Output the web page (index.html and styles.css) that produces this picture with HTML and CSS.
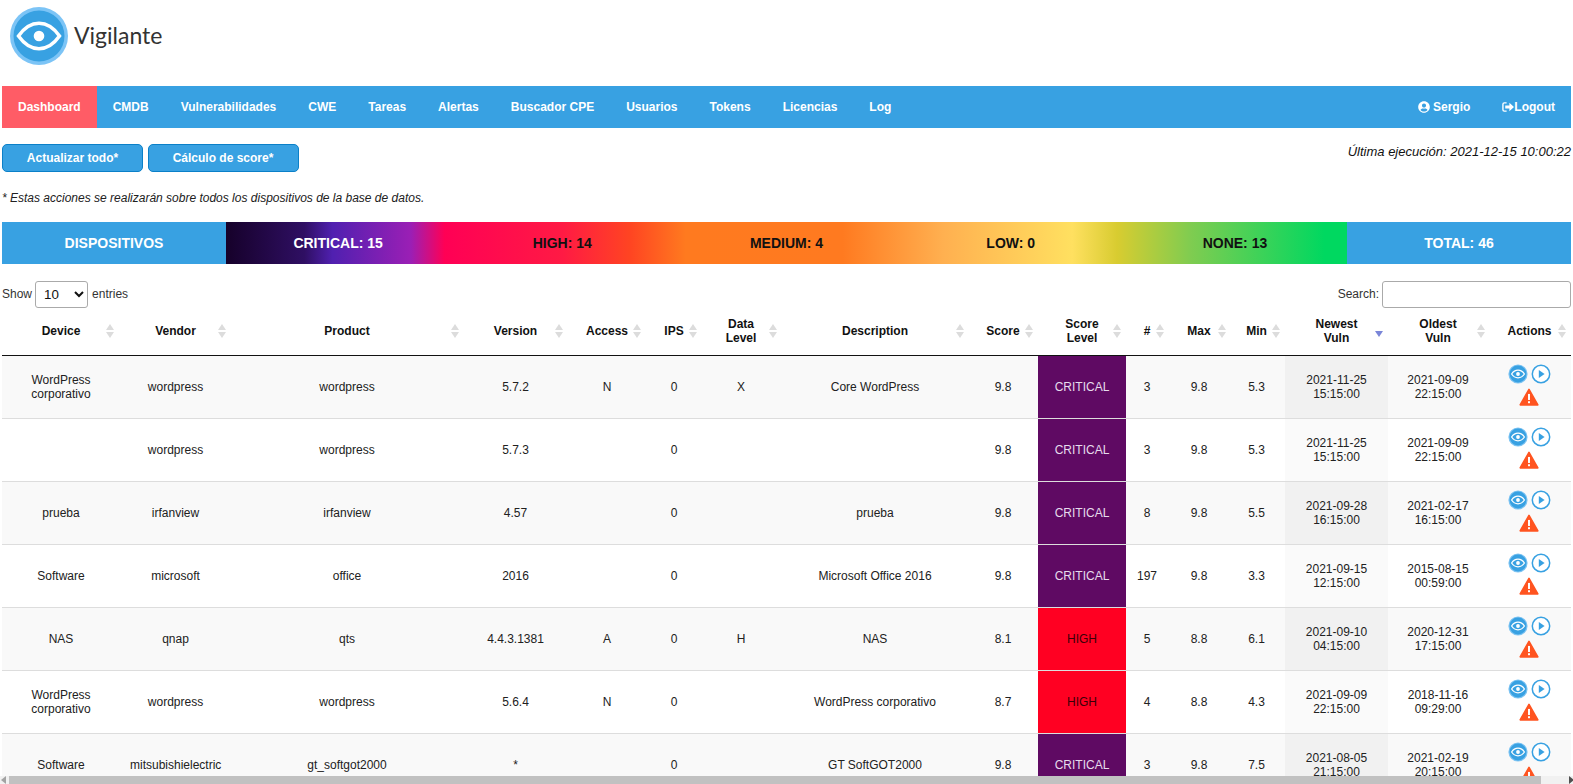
FILE: index.html
```html
<!DOCTYPE html>
<html lang="es">
<head>
<meta charset="utf-8">
<title>Vigilante</title>
<link rel="stylesheet" href="styles.css">
</head>
<body>
<svg class="defs" width="0" height="0" aria-hidden="true">
  <symbol id="i-eye" viewBox="0 0 20 20">
    <circle cx="10" cy="10" r="9.6" fill="#7cc3f2"/>
    <circle cx="10" cy="10" r="8.4" fill="#38a1e2"/>
    <path d="M3.6 10C5.2 7.5 7.4 6.2 10 6.2s4.8 1.3 6.4 3.8c-1.6 2.5-3.8 3.8-6.4 3.8S5.2 12.500 3.600 10z" fill="none" stroke="#fff" stroke-width="1.3"/>
    <circle cx="10" cy="10" r="1.9" fill="#fff"/>
  </symbol>
  <symbol id="i-play" viewBox="0 0 20 20">
    <circle cx="10" cy="10" r="8.700" fill="#fff" stroke="#38a1e2" stroke-width="1.500"/>
    <path d="M7.800 6.100l5.800 3.900-5.800 3.900z" fill="#38a1e2"/>
  </symbol>
  <symbol id="i-warn" viewBox="0 0 22 20">
    <path d="M11 1.500L20.800 18.700H1.200z" fill="#ff5420" stroke="#ff5420" stroke-width="1.800" stroke-linejoin="round"/>
    <rect x="9.900" y="6.600" width="2.200" height="6.700" fill="#fff"/>
    <rect x="9.900" y="14.700" width="2.200" height="2.200" fill="#fff"/>
  </symbol>
</svg>

<header class="brand">
  <svg class="logo" viewBox="0 0 58 58" width="58" height="58" aria-hidden="true">
    <circle cx="29" cy="29" r="29" fill="#7cc4f6"/>
    <circle cx="29" cy="29" r="25.500" fill="#38a1e2"/>
    <path d="M8.500 29C14.500 20.500 21.500 16.300 29 16.300S43.500 20.500 49.500 29C43.500 37.500 36.500 41.700 29 41.700S14.500 37.500 8.500 29z" fill="none" stroke="#fff" stroke-width="3.500"/>
    <circle cx="29" cy="29" r="5.300" fill="#fff"/>
  </svg>
  <span class="brand-name">Vigilante</span>
</header>

<nav class="nav">
  <a class="nav-item active">Dashboard</a>
  <a class="nav-item">CMDB</a>
  <a class="nav-item">Vulnerabilidades</a>
  <a class="nav-item">CWE</a>
  <a class="nav-item">Tareas</a>
  <a class="nav-item">Alertas</a>
  <a class="nav-item">Buscador CPE</a>
  <a class="nav-item">Usuarios</a>
  <a class="nav-item">Tokens</a>
  <a class="nav-item">Licencias</a>
  <a class="nav-item">Log</a>
  <a class="nav-item push">
    <svg class="nav-icon" viewBox="0 0 496 512" aria-hidden="true"><path fill="#fff" d="M248 8C111 8 0 119 0 256s111 248 248 248 248-111 248-248S385 8 248 8zm0 96c48.600 0 88 39.400 88 88s-39.400 88-88 88-88-39.400-88-88 39.400-88 88-88zm0 344c-58.700 0-111.300-26.600-146.500-68.200 18.800-35.400 55.600-59.800 98.500-59.800 2.400 0 4.800.4 7.100 1.100 13 4.200 26.600 6.900 40.900 6.900 14.300 0 28-2.700 40.900-6.900 2.300-.7 4.700-1.100 7.100-1.100 42.900 0 79.700 24.400 98.500 59.800C359.300 421.400 306.700 448 248 448z"/></svg>
    Sergio</a>
  <a class="nav-item logout">
    <svg class="nav-icon" viewBox="0 0 13 11" aria-hidden="true"><path d="M5 1H2.500A1.500 1.500 0 0 0 1 2.500v6A1.500 1.500 0 0 0 2.500 10H5" fill="none" stroke="#fff" stroke-width="1.500"/><path d="M3.500 4h4.500V1l5 4.500-5 4.500V7H3.500z" fill="#fff"/></svg>Logout</a>
</nav>

<section class="toolbar">
  <div class="buttons">
    <button class="btn btn-a">Actualizar todo*</button>
    <button class="btn btn-b">Cálculo de score*</button>
  </div>
  <em class="last-run">Última ejecución: 2021-12-15 10:00:22</em>
</section>
<p class="note">* Estas acciones se realizarán sobre todos los dispositivos de la base de datos.</p>

<section class="band">
  <div class="band-end">DISPOSITIVOS</div>
  <div class="band-mid">
    <div class="band-cell light">CRITICAL: 15</div>
    <div class="band-cell">HIGH: 14</div>
    <div class="band-cell">MEDIUM: 4</div>
    <div class="band-cell">LOW: 0</div>
    <div class="band-cell">NONE: 13</div>
  </div>
  <div class="band-end">TOTAL: 46</div>
</section>

<section class="controls">
  <label class="ctl">Show
    <select class="select"><option>10</option></select>
    entries</label>
  <label class="ctl">Search: <input class="search" type="text"></label>
</section>

<table class="grid">
  <colgroup>
    <col class="c1"><col class="c2"><col class="c3"><col class="c4"><col class="c5"><col class="c6"><col class="c7"><col class="c8"><col class="c9"><col class="c10"><col class="c11"><col class="c12"><col class="c13"><col class="c14"><col class="c15"><col class="c16">
  </colgroup>
  <thead>
    <tr>
      <th>Device</th><th>Vendor</th><th>Product</th><th>Version</th><th>Access</th><th>IPS</th><th>Data<br>Level</th><th>Description</th><th>Score</th><th>Score<br>Level</th><th>#</th><th>Max</th><th>Min</th><th class="sorted">Newest<br>Vuln</th><th>Oldest<br>Vuln</th><th>Actions</th>
    </tr>
  </thead>
  <tbody>
    <tr><td>WordPress corporativo</td><td>wordpress</td><td>wordpress</td><td>5.7.2</td><td>N</td><td>0</td><td>X</td><td>Core WordPress</td><td>9.8</td><td class="crit">CRITICAL</td><td>3</td><td>9.8</td><td>5.3</td><td class="col-sorted">2021-11-25 15:15:00</td><td>2021-09-09 22:15:00</td><td class="acts"><svg class="ic"><use href="#i-eye"/></svg><svg class="ic"><use href="#i-play"/></svg><svg class="ic-w"><use href="#i-warn"/></svg></td></tr>
    <tr><td></td><td>wordpress</td><td>wordpress</td><td>5.7.3</td><td></td><td>0</td><td></td><td></td><td>9.8</td><td class="crit">CRITICAL</td><td>3</td><td>9.8</td><td>5.3</td><td class="col-sorted">2021-11-25 15:15:00</td><td>2021-09-09 22:15:00</td><td class="acts"><svg class="ic"><use href="#i-eye"/></svg><svg class="ic"><use href="#i-play"/></svg><svg class="ic-w"><use href="#i-warn"/></svg></td></tr>
    <tr><td>prueba</td><td>irfanview</td><td>irfanview</td><td>4.57</td><td></td><td>0</td><td></td><td>prueba</td><td>9.8</td><td class="crit">CRITICAL</td><td>8</td><td>9.8</td><td>5.5</td><td class="col-sorted">2021-09-28 16:15:00</td><td>2021-02-17 16:15:00</td><td class="acts"><svg class="ic"><use href="#i-eye"/></svg><svg class="ic"><use href="#i-play"/></svg><svg class="ic-w"><use href="#i-warn"/></svg></td></tr>
    <tr><td>Software</td><td>microsoft</td><td>office</td><td>2016</td><td></td><td>0</td><td></td><td>Microsoft Office 2016</td><td>9.8</td><td class="crit">CRITICAL</td><td>197</td><td>9.8</td><td>3.3</td><td class="col-sorted">2021-09-15 12:15:00</td><td>2015-08-15 00:59:00</td><td class="acts"><svg class="ic"><use href="#i-eye"/></svg><svg class="ic"><use href="#i-play"/></svg><svg class="ic-w"><use href="#i-warn"/></svg></td></tr>
    <tr><td>NAS</td><td>qnap</td><td>qts</td><td>4.4.3.1381</td><td>A</td><td>0</td><td>H</td><td>NAS</td><td>8.1</td><td class="high">HIGH</td><td>5</td><td>8.8</td><td>6.1</td><td class="col-sorted">2021-09-10 04:15:00</td><td>2020-12-31 17:15:00</td><td class="acts"><svg class="ic"><use href="#i-eye"/></svg><svg class="ic"><use href="#i-play"/></svg><svg class="ic-w"><use href="#i-warn"/></svg></td></tr>
    <tr><td>WordPress corporativo</td><td>wordpress</td><td>wordpress</td><td>5.6.4</td><td>N</td><td>0</td><td></td><td>WordPress corporativo</td><td>8.7</td><td class="high">HIGH</td><td>4</td><td>8.8</td><td>4.3</td><td class="col-sorted">2021-09-09 22:15:00</td><td>2018-11-16 09:29:00</td><td class="acts"><svg class="ic"><use href="#i-eye"/></svg><svg class="ic"><use href="#i-play"/></svg><svg class="ic-w"><use href="#i-warn"/></svg></td></tr>
    <tr><td>Software</td><td>mitsubishielectric</td><td>gt_softgot2000</td><td>*</td><td></td><td>0</td><td></td><td>GT SoftGOT2000</td><td>9.8</td><td class="crit">CRITICAL</td><td>3</td><td>9.8</td><td>7.5</td><td class="col-sorted">2021-08-05 21:15:00</td><td>2021-02-19 20:15:00</td><td class="acts"><svg class="ic"><use href="#i-eye"/></svg><svg class="ic"><use href="#i-play"/></svg><svg class="ic-w"><use href="#i-warn"/></svg></td></tr>
  </tbody>
</table>

<div class="hscroll" aria-hidden="true">
  <span class="arrow-l"></span>
  <span class="thumb"></span>
  <span class="arrow-r"></span>
</div>
</body>
</html>
```

FILE: styles.css
```css
* { box-sizing: border-box; }
html, body { height: 784px; overflow: hidden; }
body {
  margin: 0;
  padding: 0 2px;
  font-family: "Liberation Sans", Arial, sans-serif;
  font-size: 12px;
  color: #212121;
  background: #fff;
}
.defs { position: absolute; }

.brand { height: 86px; display: flex; align-items: flex-start; padding: 7px 0 0 8px; }
.logo { flex: none; }
.brand-name {
  font-family: Lato, sans-serif;
  font-size: 23px;
  line-height: 26px;
  margin: 15px 0 0 6px;
  color: #333;
}

.nav { height: 42px; display: flex; align-items: stretch; background: #38a1e2; }
.nav-item {
  display: flex;
  align-items: center;
  padding: 0 16px;
  color: #fff;
  font-weight: 700;
  font-size: 12px;
}
.nav-item.active { background: #ff5c66; }
.nav-item.push { margin-left: auto; gap: 3px; }
.nav-icon { width: 12px; height: 12px; }

.toolbar { display: flex; justify-content: space-between; padding-top: 16px; height: 44px; }
.buttons { display: flex; gap: 5px; }
.btn {
  height: 28px;
  border: 1px solid #0b80c8;
  border-radius: 5px;
  background: #38a1e2;
  color: #fff;
  font: 700 12px "Liberation Sans", Arial, sans-serif;
  padding: 0;
}
.btn-a { width: 141px; }
.btn-b { width: 151px; padding-right: 1px; }
.last-run { font-size: 13px; line-height: 15px; color: #111; }

.note { margin: 0; padding-top: 19px; height: 50px; font-style: italic; line-height: 14px; color: #212121; }

.band { height: 42px; display: flex; font-size: 14px; font-weight: 700; }
.band-end {
  flex: 0 0 224px;
  display: flex; align-items: center; justify-content: center;
  background: #38a1e2; color: #fff;
}
.band-mid {
  flex: 1;
  display: flex;
  background: linear-gradient(90deg,
    #16012a 0, #2f0f63 7%, #5020b0 9.500%, #9b1fb5 16.500%, #ff0055 19.500%,
    #ff1a44 30%, #ff4422 36%, #ff7a1f 41%, #ff7a20 55%,
    #ffb050 64%, #ffe060 75.500%, #d8cc30 79.500%, #80cc50 86%, #00d860 98%, #00d860 100%);
}
.band-cell { flex: 1; display: flex; align-items: center; justify-content: center; color: #111; }
.band-cell.light { color: #fff; }

.controls {
  display: flex; justify-content: space-between; align-items: center;
  height: 44px; padding-top: 16px; color: #333;
}
.ctl { display: flex; align-items: center; gap: 3px; }
.select {
  width: 53px; height: 27px; margin-right: 1px;
  border: 1px solid #aaa; border-radius: 3px;
  background: #fff; color: #111;
  font: 13.33px "Liberation Sans", Arial, sans-serif;
  padding-left: 4px;
}
.search { width: 189px; height: 27px; border: 1px solid #aaa; border-radius: 3px; background: #fff; }

.grid { width: 1569px; table-layout: fixed; border-collapse: separate; border-spacing: 0; }
.c1 { width: 118px; } .c2 { width: 111px; } .c3 { width: 232px; } .c4 { width: 105px; }
.c5 { width: 78px; } .c6 { width: 56px; } .c7 { width: 78px; } .c8 { width: 190px; }
.c9 { width: 68px; } .c10 { width: 88px; } .c11 { width: 42px; } .c12 { width: 62px; }
.c13 { width: 55px; } .c14 { width: 103px; } .c15 { width: 102px; } .c16 { width: 81px; }

th {
  position: relative;
  height: 48px;
  padding: 0 10px 2px;
  text-align: center;
  vertical-align: middle;
  font-weight: 700;
  line-height: 14px;
  color: #111;
  border-bottom: 1px solid #111;
}
th:last-child { padding-right: 12px; }
th::before, th::after {
  content: "";
  position: absolute;
  right: 5px;
  width: 0; height: 0;
  border-left: 4px solid transparent;
  border-right: 4px solid transparent;
}
th:nth-child(1)::before, th:nth-child(1)::after,
th:nth-child(8)::before, th:nth-child(8)::after { right: 6px; }
th:nth-child(3)::before, th:nth-child(3)::after,
th:nth-child(11)::before, th:nth-child(11)::after,
th:nth-child(12)::before, th:nth-child(12)::after { right: 4px; }
th:nth-child(7)::before, th:nth-child(7)::after { right: 3px; }
th::before { top: 16px; border-bottom: 6px solid #dcdcdc; }
th::after { top: 24px; border-top: 6px solid #dcdcdc; }
th.sorted::before { display: none; }
th.sorted::after { top: 23px; border-top-color: #7a86d8; }

td {
  height: 63px;
  padding: 0 10px;
  text-align: center;
  vertical-align: middle;
  line-height: 14px;
  color: #212121;
  border-bottom: 1px solid #ddd;
}
td:nth-child(9), th:nth-child(9), td:nth-child(13), td:nth-child(15), th:nth-child(15), th:nth-child(13) { padding-right: 12px; }
tbody tr:nth-child(odd) td { background: #f9f9f9; }
tbody tr:nth-child(even) td { background: #fff; }
tbody tr:nth-child(odd) td.col-sorted { background: #f1f1f1; }
tbody tr:nth-child(even) td.col-sorted { background: #fafafa; }
tbody tr td.crit { background: #5f0a63; color: #e6dcec; }
tbody tr td.high { background: #ff0022; color: #3a0008; }

td.acts { padding: 8px 2px 0 0; font-size: 0; line-height: 0; vertical-align: top; }
.ic { display: inline-block; width: 20px; height: 20px; margin: 0 1.500px; }
.ic-w { display: block; width: 20px; height: 18px; margin: 4px 0 0 calc(50% - 11px); }

.hscroll {
  position: fixed; left: 0; right: 0; bottom: 0; height: 8px;
  background: #f1f1f1;
}
.thumb { position: absolute; left: 9px; width: 1532px; top: 0; bottom: 0; background: #c1c1c1; }
.arrow-l, .arrow-r { position: absolute; top: 0; width: 0; height: 0; border-top: 4px solid transparent; border-bottom: 4px solid transparent; }
.arrow-l { left: 1px; border-right: 5px solid #a3a3a3; }
.arrow-r { right: -1px; border-left: 5px solid #505050; }
```
